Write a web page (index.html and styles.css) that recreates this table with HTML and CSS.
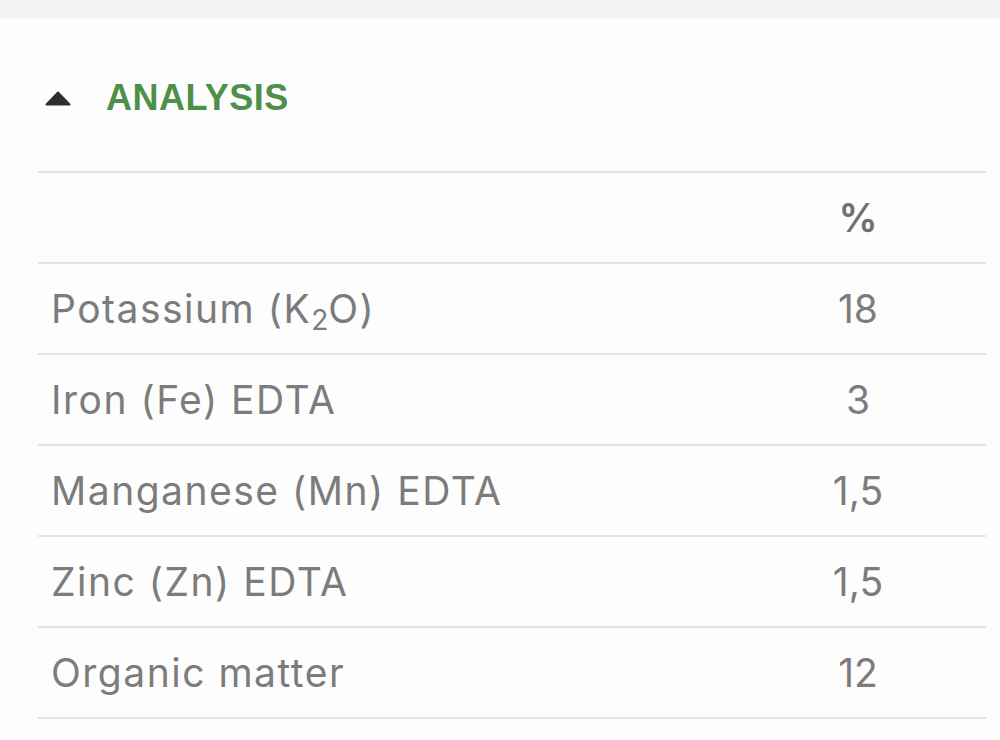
FILE: index.html
```html
<!DOCTYPE html>
<html lang="en">
<head>
<meta charset="utf-8">
<title>Analysis</title>
<link rel="stylesheet" href="styles.css">
</head>
<body>
<div class="topbar"></div>
<section class="section">
  <div class="heading">
    <svg class="caret" width="26" height="15" viewBox="0 0 26 15" aria-hidden="true">
      <path d="M13 1.5 L24.5 13.5 L1.5 13.5 Z" fill="#2e2e2e" stroke="#2e2e2e" stroke-width="2" stroke-linejoin="round"/>
    </svg>
    <h2 class="title">ANALYSIS</h2>
  </div>
  <div class="table">
    <div class="row head"><div class="name"></div><div class="val">%</div></div>
    <div class="row"><div class="name">Potassium (K<sub>2</sub>O)</div><div class="val">18</div></div>
    <div class="row"><div class="name">Iron (Fe) EDTA</div><div class="val">3</div></div>
    <div class="row"><div class="name">Manganese (Mn) EDTA</div><div class="val">1,5</div></div>
    <div class="row"><div class="name">Zinc (Zn) EDTA</div><div class="val">1,5</div></div>
    <div class="row"><div class="name">Organic matter</div><div class="val">12</div></div>
  </div>
</section>
</body>
</html>
```
FILE: styles.css
```css
html, body {
  margin: 0;
  padding: 0;
  background: #fdfdfd;
}
body {
  font-family: Inter, "Noto Sans", sans-serif;
  width: 1000px;
  height: 740px;
  overflow: hidden;
}
.topbar {
  height: 18px;
  background: #f4f4f4;
}
.section {
  padding: 0 14px 0 38px;
}
.heading {
  display: flex;
  align-items: center;
  gap: 35px;
  height: 36px;
  padding: 62px 0 55px 7px;
}
.caret {
  display: block;
}
.title {
  margin: 0;
  font-family: "Liberation Sans", Arial, sans-serif;
  font-weight: 700;
  font-size: 36px;
  line-height: 36px;
  color: #4d9049;
  letter-spacing: 0.5px;
}
.table {
  border-top: 2px solid #e3e3e3;
}
.row {
  display: grid;
  grid-template-columns: 1fr 256px;
  align-items: center;
  height: 89px;
  border-bottom: 2px solid #e3e3e3;
  color: #7c7c7c;
  font-size: 39px;
}
.name {
  padding-left: 13px;
  letter-spacing: 1.5px;
}
.val {
  text-align: center;
}
.head .val {
  font-weight: 600;
  color: #707070;
}
sub {
  font-size: 0.72em;
  vertical-align: -0.25em;
  line-height: 0;
  letter-spacing: 0;
}
```
